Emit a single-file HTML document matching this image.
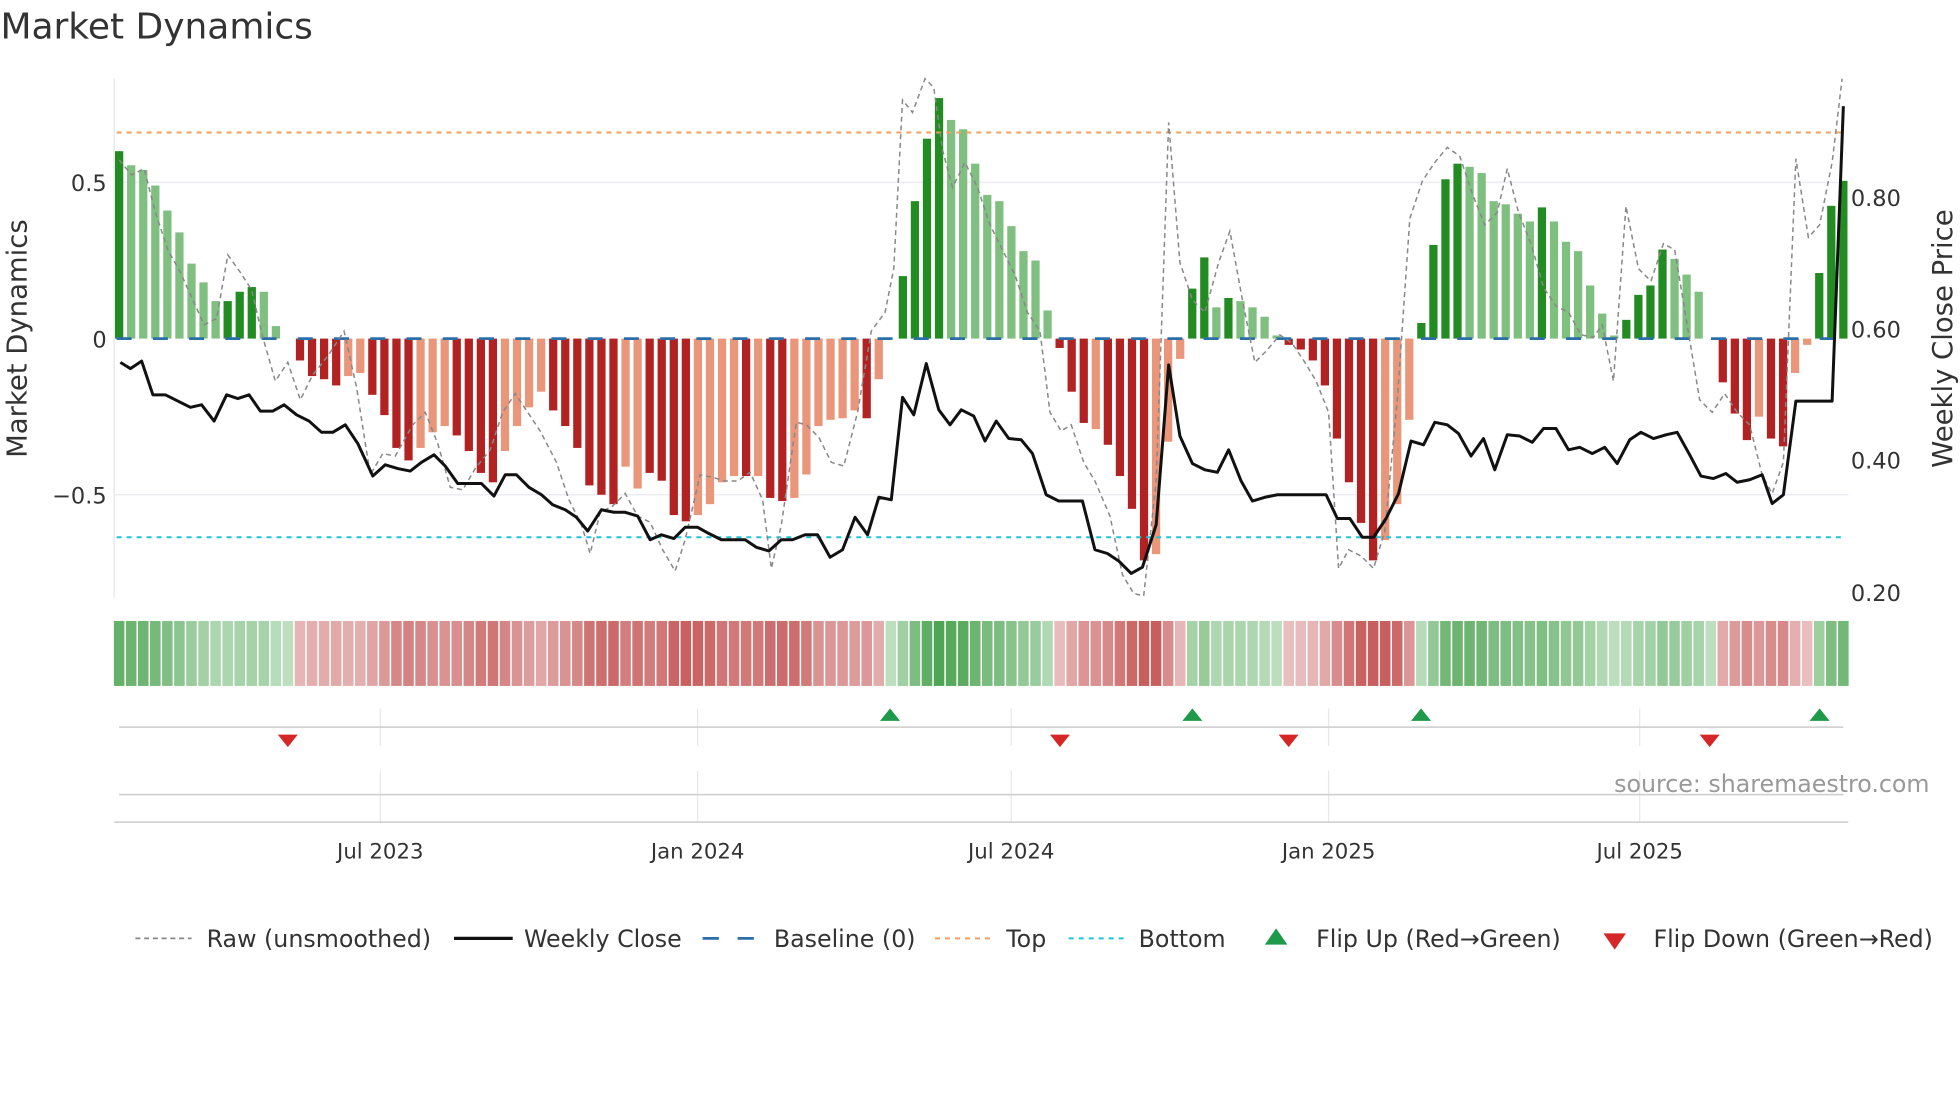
<!DOCTYPE html>
<html><head><meta charset="utf-8">
<style>
html,body{margin:0;padding:0;background:#fff;}
svg{display:block;font-family:"DejaVu Sans","Liberation Sans",sans-serif;}
</style></head>
<body>
<svg id="s" width="1960" height="1102" viewBox="0 0 1568 882" xmlns="http://www.w3.org/2000/svg">
<rect width="1568" height="882" fill="#fff"/>
<text x="0" y="31" font-size="28.8" fill="#333">Market Dynamics</text>
<line x1="91" y1="63" x2="91" y2="478" stroke="#e6e6e6" stroke-width="1"/>
<line x1="91" y1="146" x2="1479" y2="146" stroke="#ececf2" stroke-width="1.2"/>
<line x1="91" y1="396" x2="1479" y2="396" stroke="#ececf2" stroke-width="1.2"/>
<g id="bars"></g>
<line x1="93" y1="106" x2="1476" y2="106" stroke="#f0a060" stroke-width="1.6" stroke-dasharray="4,4"/>
<line x1="93" y1="430" x2="1476" y2="430" stroke="#22c4d4" stroke-width="1.6" stroke-dasharray="4,4"/>
<line x1="93" y1="271" x2="1476" y2="271" stroke="#2a6fa8" stroke-width="2.2" stroke-dasharray="12,17"/>
<polyline id="raw" fill="none" stroke="#888" stroke-width="1.2" stroke-dasharray="4,3"/>
<polyline id="close" fill="none" stroke="#111" stroke-width="2.4" stroke-linejoin="round"/>
<g font-size="18" fill="#333">
<text x="85" y="153" text-anchor="end">0.5</text>
<text x="85" y="278" text-anchor="end">0</text>
<text x="85" y="403" text-anchor="end">−0.5</text>
<text x="1481" y="165">0.80</text>
<text x="1481" y="270">0.60</text>
<text x="1481" y="375">0.40</text>
<text x="1481" y="481">0.20</text>
</g>
<text transform="translate(21,271) rotate(-90)" font-size="22" fill="#333" text-anchor="middle">Market Dynamics</text>
<text transform="translate(1562,271) rotate(-90)" font-size="22" fill="#333" text-anchor="middle">Weekly Close Price</text>
<g id="heat"></g>
<g stroke="#e8e8e8" stroke-width="1">
<line x1="304" y1="567" x2="304" y2="597"/><line x1="558" y1="567" x2="558" y2="597"/><line x1="809" y1="567" x2="809" y2="597"/><line x1="1063" y1="567" x2="1063" y2="597"/><line x1="1312" y1="567" x2="1312" y2="597"/>
<line x1="304" y1="617" x2="304" y2="658"/><line x1="558" y1="617" x2="558" y2="658"/><line x1="809" y1="617" x2="809" y2="658"/><line x1="1063" y1="617" x2="1063" y2="658"/><line x1="1312" y1="617" x2="1312" y2="658"/>
</g>
<line x1="95" y1="582" x2="1475" y2="582" stroke="#ccc" stroke-width="1.2"/>
<line x1="95" y1="636" x2="1475" y2="636" stroke="#ccc" stroke-width="1.2"/>
<line x1="91" y1="658" x2="1479" y2="658" stroke="#ccc" stroke-width="1.2"/>
<g fill="#1e9a4a">
<polygon points="712,567 704,577 720,577"/><polygon points="954,567 946,577 962,577"/><polygon points="1137,567 1129,577 1145,577"/><polygon points="1456,567 1448,577 1464,577"/>
</g>
<g fill="#d62728">
<polygon points="230,598 222,588 238,588"/><polygon points="848,598 840,588 856,588"/><polygon points="1031,598 1023,588 1039,588"/><polygon points="1368,598 1360,588 1376,588"/>
</g>
<text x="1544" y="634" font-size="19" fill="#999" text-anchor="end">source: sharemaestro.com</text>
<g font-size="17" fill="#333" text-anchor="middle">
<text x="304" y="687">Jul 2023</text><text x="558" y="687">Jan 2024</text><text x="809" y="687">Jul 2024</text><text x="1063" y="687">Jan 2025</text><text x="1312" y="687">Jul 2025</text>
</g>
<g font-size="19" fill="#333">
<line x1="108" y1="751" x2="153" y2="751" stroke="#888" stroke-width="1.4" stroke-dasharray="4,3"/>
<text x="165" y="758">Raw (unsmoothed)</text>
<line x1="363" y1="751" x2="410" y2="751" stroke="#111" stroke-width="2.6"/>
<text x="419" y="758">Weekly Close</text>
<line x1="562" y1="751" x2="607" y2="751" stroke="#2a6fa8" stroke-width="2.2" stroke-dasharray="13,15"/>
<text x="619" y="758">Baseline (0)</text>
<line x1="748" y1="751" x2="793" y2="751" stroke="#f0a060" stroke-width="1.6" stroke-dasharray="4,4"/>
<text x="805" y="758">Top</text>
<line x1="855" y1="751" x2="900" y2="751" stroke="#22c4d4" stroke-width="1.6" stroke-dasharray="4,4"/>
<text x="911" y="758">Bottom</text>
<polygon points="1021,743 1012,756 1030,756" fill="#1e9a4a"/>
<text x="1053" y="758">Flip Up (Red→Green)</text>
<polygon points="1292,760 1283,747 1301,747" fill="#d62728"/>
<text x="1323" y="758">Flip Down (Green→Red)</text>
</g>
</svg>
<script>
var V=[[.6,1],[.555,0],[.54,0],[.49,0],[.41,0],[.34,0],[.24,0],[.18,0],[.12,0],[.12,1],[.15,1],[.165,1],[.15,0],[.04,0],[0,0],
[-.07,1],[-.12,1],[-.13,1],[-.15,1],[-.12,0],[-.11,0],[-.18,1],[-.245,1],[-.35,1],[-.39,1],[-.35,0],[-.3,0],[-.28,0],[-.31,1],[-.36,1],[-.43,1],[-.46,1],[-.36,0],[-.28,0],[-.22,0],[-.17,0],[-.23,1],[-.28,1],[-.35,1],[-.47,1],[-.5,1],[-.53,1],[-.41,0],[-.48,0],[-.43,1],[-.455,1],[-.565,1],[-.585,1],[-.565,0],[-.53,0],[-.46,0],[-.44,0],[-.44,1],[-.44,0],[-.51,1],[-.52,1],[-.51,0],[-.435,0],[-.28,0],[-.26,0],[-.255,0],[-.23,0],[-.255,1],[-.13,0],[0,0],
[.2,1],[.44,1],[.64,1],[.77,1],[.70,0],[.67,0],[.56,0],[.46,0],[.44,0],[.36,0],[.28,0],[.25,0],[.09,0],
[-.03,1],[-.17,1],[-.27,1],[-.29,0],[-.34,1],[-.44,1],[-.545,1],[-.71,1],[-.69,0],[-.33,0],[-.065,0],
[.16,1],[.26,1],[.10,0],[.13,1],[.12,0],[.10,0],[.07,0],[.01,0],
[-.02,1],[-.035,1],[-.07,1],[-.15,1],[-.32,1],[-.46,1],[-.59,1],[-.71,1],[-.645,0],[-.53,0],[-.26,0],
[.05,1],[.30,1],[.51,1],[.56,1],[.55,0],[.53,0],[.44,0],[.43,0],[.40,0],[.375,0],[.42,1],[.375,0],[.31,0],[.28,0],[.17,0],[.08,0],[.01,0],[.06,1],[.14,1],[.17,1],[.285,1],[.255,0],[.205,0],[.15,0],[0,0],
[-.14,1],[-.24,1],[-.325,1],[-.25,0],[-.32,1],[-.345,1],[-.11,0],[-.02,0],[.21,1],[.425,1],[.505,1]];
var N=V.length,x0=95,x1=1475,st=(x1-x0)/(N-1),ns="http://www.w3.org/2000/svg";
var B=document.getElementById('bars'),H=document.getElementById('heat');
function r(g,a){var e=document.createElementNS(ns,'rect');for(var k in a)e.setAttribute(k,a[k]);g.appendChild(e);}
for(var i=0;i<N;i++){var v=V[i][0],d=V[i][1],x=x0+i*st,h=Math.abs(v)*250;
 var c=v>=0?(d?'#228b22':'#7fbf7f'):(d?'#b22222':'#e9967a');
 if(h>0.5)r(B,{x:x-3.3,y:v>=0?271-h:271,width:6.6,height:h,fill:c});
 var t=Math.min(1,Math.abs(v)/0.75);t=0.25+0.75*t;var col;
 if(v>=0){col='rgb('+Math.round(225-(225-80)*t)+','+Math.round(242-(242-165)*t)+','+Math.round(226-(226-85)*t)+')';}
 else{t=Math.min(1,Math.abs(v)/0.6);t=0.2+0.8*t;col='rgb('+Math.round(243-(243-200)*t)+','+Math.round(218-(218-95)*t)+','+Math.round(218-(218-95)*t)+')';}
 r(H,{x:x-st/2+0.6,y:497,width:st-1.2,height:52,fill:col});
}
var C=[[96,290],[104,295],[113,289],[122,316],[132,316],[142,321],[152,326],[161,324],[171,337],[181,316],[190,319],[199,316],[208,329],[218,329],[227,324],[237,332],[247,337],[257,346],[266,346],[276,340],[286,355],[298,381],[308,372],[318,375],[328,377],[337,370],[347,364],[356,373],[366,387],[376,387],[385,387],[395,397],[404,380],[413,380],[423,390],[433,396],[442,404],[452,408],[461,414],[470,425],[481,408],[491,410],[500,410],[510,413],[520,432],[529,428],[539,431],[548,422],[558,422],[567,427],[577,432],[586,432],[596,432],[605,438],[615,441],[625,432],[634,432],[644,428],[654,428],[664,446],[674,440],[684,414],[694,428],[703,398],[713,400],[722,318],[731,332],[741,291],[751,328],[760,340],[769,328],[779,333],[788,353],[797,337],[807,351],[817,352],[826,363],[837,396],[847,401],[857,401],[866,401],[876,440],[886,443],[895,449],[905,459],[914,454],[925,420],[935,292],[944,349],[954,371],[964,376],[974,378],[983,360],[993,385],[1002,401],[1012,398],[1022,396],[1032,396],[1042,396],[1052,396],[1061,396],[1070,415],[1080,415],[1090,430],[1099,430],[1109,415],[1119,395],[1129,353],[1139,356],[1148,338],[1158,340],[1167,347],[1177,365],[1187,351],[1196,376],[1206,348],[1216,349],[1226,354],[1235,343],[1245,343],[1255,360],[1264,358],[1274,363],[1284,358],[1294,371],[1304,352],[1313,346],[1323,351],[1333,348],[1342,346],[1352,364],[1361,381],[1371,383],[1381,379],[1390,386],[1400,384],[1410,380],[1418,403],[1427,396],[1437,321],[1447,321],[1456,321],[1466,321],[1475,85]];
var R=[[95,128],[105,140],[115,135],[124,170],[134,200],[144,218],[154,240],[163,260],[173,255],[182,204],[192,218],[201,232],[210,270],[220,305],[230,290],[240,320],[250,300],[262,285],[275,265],[285,310],[296,380],[306,363],[316,365],[330,340],[340,330],[350,355],[360,390],[370,392],[380,375],[392,360],[402,330],[412,315],[422,330],[432,345],[445,370],[455,400],[465,420],[472,443],[480,410],[490,405],[500,395],[510,413],[520,418],[530,440],[540,457],[548,432],[560,380],[570,382],[580,385],[590,385],[600,378],[610,400],[617,455],[625,420],[637,338],[645,340],[655,350],[665,370],[675,373],[686,330],[697,265],[708,250],[715,215],[722,80],[730,90],[740,63],[747,70],[754,120],[762,150],[772,130],[782,150],[792,180],[802,200],[812,220],[822,250],[832,265],[840,330],[849,345],[857,340],[867,370],[876,385],[888,413],[898,460],[907,475],[915,477],[925,385],[935,98],[944,210],[954,240],[964,250],[975,210],[984,185],[994,240],[1004,290],[1014,280],[1024,268],[1034,275],[1044,290],[1053,305],[1063,330],[1071,455],[1079,440],[1089,445],[1099,455],[1108,425],[1118,320],[1128,175],[1138,145],[1148,130],[1158,118],[1168,125],[1178,155],[1188,180],[1198,170],[1206,135],[1215,170],[1225,195],[1235,230],[1245,245],[1255,250],[1265,268],[1275,270],[1282,260],[1291,305],[1301,165],[1311,215],[1321,225],[1331,195],[1340,200],[1350,260],[1360,320],[1370,330],[1380,315],[1390,330],[1400,340],[1410,380],[1418,395],[1427,370],[1437,127],[1447,190],[1456,180],[1466,130],[1474,63]];
document.getElementById('close').setAttribute('points',C.map(function(p){return p.join(',')}).join(' '));
document.getElementById('raw').setAttribute('points',R.map(function(p){return p.join(',')}).join(' '));
</script>
</body></html>
